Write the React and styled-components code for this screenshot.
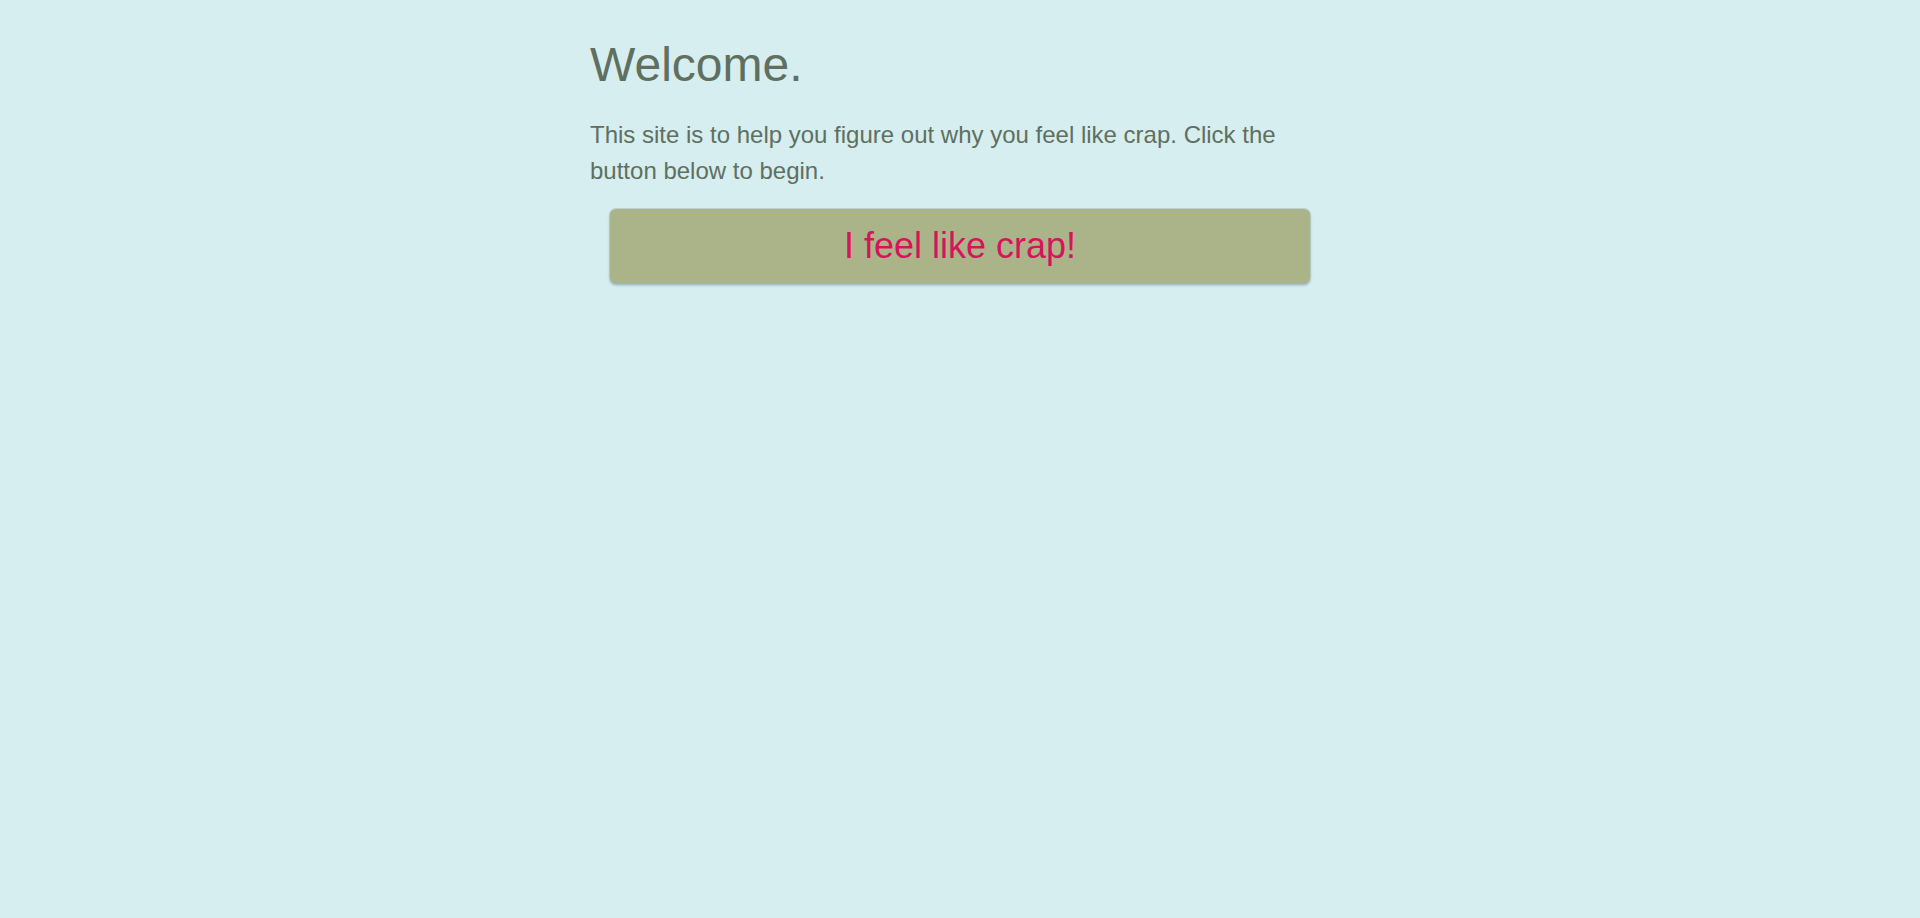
import styled, { createGlobalStyle } from 'styled-components';

const GlobalStyle = createGlobalStyle`
  html, body {
    margin: 0;
    padding: 0;
    background-color: #d6eef0;
  }
  body {
    font-family: "Liberation Sans", Arial, sans-serif;
    min-height: 918px;
  }
`

const Container = styled.div`
  width: 740px;
  margin: 0 auto;
  padding-top: 39px;
`

const Title = styled.h1`
  margin: 0 0 25px 0;
  font-size: 48px;
  font-weight: 400;
  line-height: 52.8px;
  color: #5f6f60;
`

const Lead = styled.p`
  max-width: 720px;
  margin: 0 0 20px 0;
  font-size: 24px;
  line-height: 36px;
  color: #5f6f60;
`

const ButtonRow = styled.div`
  padding: 0 20px;
`

const BigButton = styled.button`
  display: block;
  width: 100%;
  height: 74px;
  border: none;
  border-radius: 6px;
  background-color: #aab488;
  color: #d6145c;
  font-family: "Liberation Sans", Arial, sans-serif;
  font-size: 36px;
  line-height: 42px;
  box-shadow: 0 0 0 1px rgba(160, 190, 180, 0.5), 0 2px 3px rgba(60, 80, 90, 0.45);
  cursor: pointer;
`

const App = () => {
  return (
    <>
      <GlobalStyle />
      <Container>
        <Title>Welcome.</Title>
        <Lead>
          This site is to help you figure out why you feel like crap. Click the button below to begin.
        </Lead>
        <ButtonRow>
          <BigButton>I feel like crap!</BigButton>
        </ButtonRow>
      </Container>
    </>
  )
}

export default App
